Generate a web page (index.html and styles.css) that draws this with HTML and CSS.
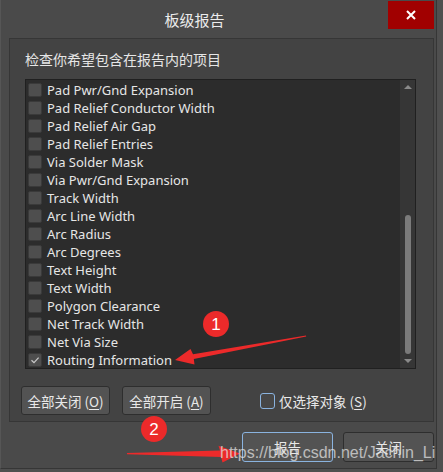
FILE: index.html
```html
<!DOCTYPE html>
<html lang="zh-CN">
<head>
<meta charset="utf-8">
<title>板级报告</title>
<link rel="stylesheet" href="styles.css">
</head>
<body>
<div class="dialog">
  <div class="titlebar">
    <div class="title">板级报告</div>
    <div class="close">
      <svg width="10" height="10" viewBox="0 0 10 10"><path d="M1 1 L9 9 M9 1 L1 9" stroke="#fff" stroke-width="2" fill="none"/></svg>
    </div>
  </div>
  <div class="panel">
    <div class="label">检查你希望包含在报告内的项目</div>
    <div class="list">
      <div class="items">
        <div class="item"><span class="cb"></span><span class="txt">Pad Pwr/Gnd Expansion</span></div>
        <div class="item"><span class="cb"></span><span class="txt">Pad Relief Conductor Width</span></div>
        <div class="item"><span class="cb"></span><span class="txt">Pad Relief Air Gap</span></div>
        <div class="item"><span class="cb"></span><span class="txt">Pad Relief Entries</span></div>
        <div class="item"><span class="cb"></span><span class="txt">Via Solder Mask</span></div>
        <div class="item"><span class="cb"></span><span class="txt">Via Pwr/Gnd Expansion</span></div>
        <div class="item"><span class="cb"></span><span class="txt">Track Width</span></div>
        <div class="item"><span class="cb"></span><span class="txt">Arc Line Width</span></div>
        <div class="item"><span class="cb"></span><span class="txt">Arc Radius</span></div>
        <div class="item"><span class="cb"></span><span class="txt">Arc Degrees</span></div>
        <div class="item"><span class="cb"></span><span class="txt">Text Height</span></div>
        <div class="item"><span class="cb"></span><span class="txt">Text Width</span></div>
        <div class="item"><span class="cb"></span><span class="txt">Polygon Clearance</span></div>
        <div class="item"><span class="cb"></span><span class="txt">Net Track Width</span></div>
        <div class="item"><span class="cb"></span><span class="txt">Net Via Size</span></div>
        <div class="item"><span class="cb checked"><svg width="14" height="14" viewBox="0 0 14 14"><path d="M3.5 7.2 L6 9.6 L10.6 4.6" stroke="#c9c9c9" stroke-width="1.2" fill="none"/></svg></span><span class="txt">Routing Information</span></div>
      </div>
      <div class="scrollbar">
        <div class="sb-btn"><span class="tri up"></span></div>
        <div class="track"><div class="thumb"></div></div>
        <div class="sb-btn"><span class="tri down"></span></div>
      </div>
    </div>
    <div class="actions">
      <div class="btn small">全部关闭 (<u>O</u>)</div>
      <div class="btn small">全部开启 (<u>A</u>)</div>
      <div class="opt"><span class="optbox"></span><span>仅选择对象 (<u>S</u>)</span></div>
    </div>
  </div>
  <div class="footer">
    <div class="btn big default">报告</div>
    <div class="btn big">关闭</div>
  </div>
</div>

<svg class="annot" width="443" height="472" viewBox="0 0 443 472">
  <polygon fill="#ec2a2a" points="175,360 190.5,349 193,354.2 306,335.4 306.2,336.6 193.8,359 194.5,364.5"/>
  <circle cx="216" cy="324" r="13" fill="#ec2a2a"/>
  <text x="216" y="330" text-anchor="middle" class="num">1</text>
  <polygon fill="#ec2a2a" points="127,453 220,450.6 218.5,445.8 240,453.5 222.5,462.5 221,457 127,454.2"/>
  <circle cx="154" cy="429" r="13" fill="#ec2a2a"/>
  <text x="154" y="435" text-anchor="middle" class="num">2</text>
</svg>
<div class="watermark">https://blog.csdn.net/Jachin_Li</div>
</body>
</html>
```
FILE: styles.css
```css
html, body {
  margin: 0;
  padding: 0;
}
body {
  width: 443px;
  height: 472px;
  background: #4f4f4f;
  font-family: "Noto Sans", "Noto Sans CJK SC", sans-serif;
  color: #e4e4e4;
  position: relative;
  overflow: hidden;
}
.dialog {
  box-sizing: border-box;
  width: 437px;
  height: 469px;
  background: #4a4a4a;
  border-left: 1px solid #565656;
  border-right: 1px solid #363636;
  border-bottom: 1px solid #363636;
}
.titlebar {
  display: flex;
  height: 29px;
}
.title {
  flex: 1;
  text-align: center;
  font-family: "Noto Sans CJK SC", sans-serif;
  font-size: 15px;
  line-height: 20px;
  padding-top: 10px;
  color: #ececec;
}
.close {
  width: 46px;
  height: 28px;
  margin-top: 1px;
  margin-right: 2px;
  background: #a10000;
  display: flex;
  align-items: center;
  justify-content: center;
  padding-bottom: 1px;
  box-sizing: border-box;
}
.close svg { display: block; }
.panel {
  box-sizing: border-box;
  margin: 9px 0 0 8px;
  width: 425px;
  height: 384px;
  background: #434343;
  border: 1px solid #363636;
}
.label {
  margin: 11px 0 0 15px;
  height: 18px;
  line-height: 18px;
  font-family: "Noto Sans CJK SC", sans-serif;
  font-size: 14px;
  color: #e6e6e6;
}
.list {
  box-sizing: border-box;
  margin: 11px 0 0 15px;
  width: 391px;
  height: 290px;
  background: #2c2c2c;
  border: 1px solid #202020;
  display: flex;
}
.items {
  flex: 1;
  padding-top: 1px;
  overflow: hidden;
}
.item {
  height: 18px;
  display: flex;
  align-items: center;
  padding-left: 2px;
  gap: 5px;
  font-size: 13px;
  color: #e6e6e6;
  white-space: nowrap;
}
.cb {
  box-sizing: border-box;
  width: 14px;
  height: 14px;
  flex: none;
  background: #4e4e4e;
  border: 1px solid #3a3a3a;
  border-radius: 2px;
  position: relative;
}
.cb svg {
  position: absolute;
  left: -1px;
  top: -1px;
}
.scrollbar {
  width: 15px;
  background: #363636;
  display: flex;
  flex-direction: column;
}
.sb-btn {
  height: 14px;
  display: flex;
  align-items: center;
  justify-content: center;
}
.tri {
  width: 0;
  height: 0;
  border-left: 4px solid transparent;
  border-right: 4px solid transparent;
}
.tri.up { border-bottom: 4px solid #8a8a8a; }
.tri.down { border-top: 4px solid #8a8a8a; }
.track {
  flex: 1;
  display: flex;
  justify-content: center;
}
.thumb {
  width: 6px;
  height: 139px;
  margin-top: 121px;
  border-radius: 3px;
  background: #7b7b7b;
}
.actions {
  display: flex;
  align-items: center;
  margin-top: 17px;
  padding-left: 11px;
  gap: 12px;
}
.btn {
  box-sizing: border-box;
  background: #535353;
  border: 1px solid #2e2e2e;
  border-radius: 3px;
  display: flex;
  align-items: center;
  justify-content: center;
  font-family: "Noto Sans CJK SC", sans-serif;
  font-size: 13.5px;
  color: #e8e8e8;
}
.btn u, .opt u { text-underline-offset: 2px; }
.btn.small {
  width: 89px;
  height: 29px;
}
.btn.big {
  width: 91px;
  height: 30px;
}
.btn.default {
  border-color: #8ab3df;
}
.opt {
  margin-left: 37px;
  display: flex;
  align-items: center;
  gap: 4px;
  font-family: "Noto Sans CJK SC", sans-serif;
  font-size: 13.5px;
  color: #e8e8e8;
}
.optbox {
  box-sizing: border-box;
  width: 15px;
  height: 16px;
  border: 1px solid #8ab3df;
  border-radius: 3px;
  background: #474747;
}
.footer {
  display: flex;
  justify-content: flex-end;
  gap: 10px;
  margin-top: 10px;
  padding-right: 2px;
}
.annot {
  position: absolute;
  left: 0;
  top: 0;
  pointer-events: none;
}
.num {
  font-family: "Liberation Sans", sans-serif;
  font-size: 17px;
  fill: #ffffff;
}
.watermark {
  position: absolute;
  left: 220px;
  top: 442px;
  font-family: "Liberation Sans", sans-serif;
  font-size: 16px;
  line-height: 22px;
  color: rgba(225, 225, 225, 0.75);
  white-space: nowrap;
}
```
